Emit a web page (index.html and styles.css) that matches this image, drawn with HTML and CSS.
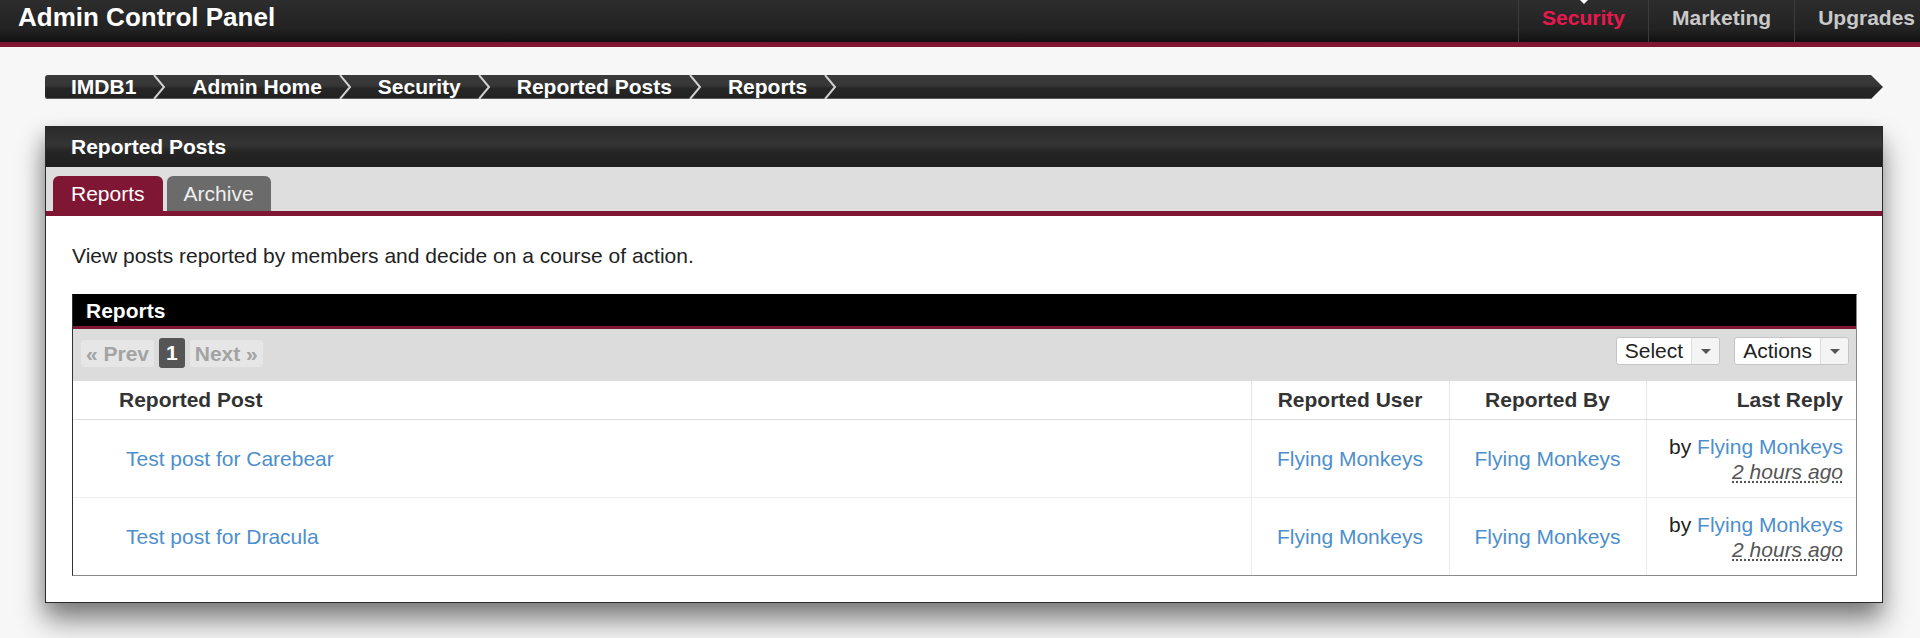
FILE: index.html
```html
<!DOCTYPE html>
<html lang="en">
<head>
  <meta charset="UTF-8">
  <title>Admin Control Panel - Reported Posts</title>
  <link rel="stylesheet" href="styles.css">
</head>
<body>
  <div class="topbar">
    <div class="brand">Admin Control Panel</div>
    <ul class="topnav">
      <li class="active">Security</li>
      <li>Marketing</li>
      <li>Upgrades</li>
    </ul>
  </div>

  <div class="page">
    <div class="breadcrumb">
      <a class="crumb" href="#">IMDB1</a>
      <span class="sep"><svg width="14" height="24" viewBox="0 0 14 24"><polyline points="2,0 12,12 2,24" fill="none" stroke="#d0d0d0" stroke-width="2"/></svg></span>
      <a class="crumb" href="#">Admin Home</a>
      <span class="sep"><svg width="14" height="24" viewBox="0 0 14 24"><polyline points="2,0 12,12 2,24" fill="none" stroke="#d0d0d0" stroke-width="2"/></svg></span>
      <a class="crumb" href="#">Security</a>
      <span class="sep"><svg width="14" height="24" viewBox="0 0 14 24"><polyline points="2,0 12,12 2,24" fill="none" stroke="#d0d0d0" stroke-width="2"/></svg></span>
      <a class="crumb" href="#">Reported Posts</a>
      <span class="sep"><svg width="14" height="24" viewBox="0 0 14 24"><polyline points="2,0 12,12 2,24" fill="none" stroke="#d0d0d0" stroke-width="2"/></svg></span>
      <a class="crumb" href="#">Reports</a>
      <span class="sep"><svg width="14" height="24" viewBox="0 0 14 24"><polyline points="2,0 12,12 2,24" fill="none" stroke="#d0d0d0" stroke-width="2"/></svg></span>
    </div>

    <div class="panel">
      <div class="panel-head">Reported Posts</div>
      <div class="tabs">
        <a class="tab active" href="#">Reports</a>
        <a class="tab" href="#">Archive</a>
      </div>

      <div class="panel-body">
        <p class="intro">View posts reported by members and decide on a course of action.</p>

        <div class="block">
          <div class="block-head">Reports</div>
          <div class="toolbar">
            <div class="pager">
              <span class="page-btn disabled">« Prev</span>
              <span class="page-btn current">1</span>
              <span class="page-btn disabled">Next »</span>
            </div>
            <div class="tools">
              <div class="split-btn">
                <span class="split-label">Select</span>
                <span class="split-caret"></span>
              </div>
              <div class="split-btn">
                <span class="split-label">Actions</span>
                <span class="split-caret"></span>
              </div>
            </div>
          </div>

          <table class="reports">
            <colgroup>
              <col class="col-post">
              <col class="col-user">
              <col class="col-by">
              <col>
            </colgroup>
            <thead>
              <tr>
                <th class="th-post">Reported Post</th>
                <th>Reported User</th>
                <th>Reported By</th>
                <th class="th-last">Last Reply</th>
              </tr>
            </thead>
            <tbody>
              <tr>
                <td class="td-post"><a href="#">Test post for Carebear</a></td>
                <td class="td-center"><a href="#">Flying Monkeys</a></td>
                <td class="td-center"><a href="#">Flying Monkeys</a></td>
                <td class="td-last">by <a href="#">Flying Monkeys</a><br><span class="ago">2 hours ago</span></td>
              </tr>
              <tr>
                <td class="td-post"><a href="#">Test post for Dracula</a></td>
                <td class="td-center"><a href="#">Flying Monkeys</a></td>
                <td class="td-center"><a href="#">Flying Monkeys</a></td>
                <td class="td-last">by <a href="#">Flying Monkeys</a><br><span class="ago">2 hours ago</span></td>
              </tr>
            </tbody>
          </table>
        </div>
      </div>
    </div>
  </div>
</body>
</html>
```

FILE: styles.css
```css
body {
  margin: 0;
  background-color: #f7f7f7;
  font-family: "Liberation Sans", Arial, sans-serif;
  font-size: 21px;
  color: #333;
  overflow: hidden;
}

a {
  color: #4d8fcc;
  text-decoration: none;
}

/* top bar */
.topbar {
  display: flex;
  height: 42px;
  background: linear-gradient(#2d2d2d, #222 70%, #111);
  border-bottom: 5px solid #7f1734;
  overflow: hidden;
}

.brand {
  padding-left: 18px;
  font-size: 26px;
  font-weight: bold;
  color: #fff;
  line-height: 35px;
}

.topnav {
  display: flex;
  margin: 0 -18px 0 auto;
  padding: 0;
  list-style: none;
}

.topnav li {
  position: relative;
  padding: 0 23px 7px;
  line-height: 35px;
  font-weight: bold;
  color: #c9c9c9;
  border-left: 1px solid #3c3c3c;
}

.topnav li.active {
  color: #e8184f;
}

.topnav li.active::before {
  content: "";
  position: absolute;
  top: 0;
  left: 50%;
  margin-left: -4px;
  border: 4px solid transparent;
  border-top-color: #fff;
}

/* page */
.page {
  padding: 28px 37px 60px 45px;
}

.breadcrumb {
  display: flex;
  align-items: center;
  height: 24px;
  padding-left: 26px;
  background: linear-gradient(#3a3a3a, #363636 45%, #262626 55%, #222);
  border-radius: 3px 0 0 3px;
  box-shadow: inset 0 -1px 0 #5a5a5a;
  clip-path: polygon(0 0, calc(100% - 12px) 0, 100% 50%, calc(100% - 12px) 100%, 0 100%);
}

.crumb {
  color: #fff;
  font-weight: bold;
  line-height: 24px;
}

.sep {
  display: flex;
  margin: 0 26px 0 16px;
}

/* panel */
.panel {
  margin-top: 27px;
  background-color: #fff;
  border: 1px solid #2a2a2a;
  box-shadow: 0 18px 26px rgba(0, 0, 0, 0.45), -4px 6px 16px rgba(0, 0, 0, 0.12);
}

.panel-head {
  height: 40px;
  line-height: 40px;
  padding-left: 25px;
  color: #fff;
  font-weight: bold;
  background: linear-gradient(#2a2a2a, #353535 45%, #262626 60%, #1e1e1e);
}

.tabs {
  display: flex;
  gap: 4px;
  padding: 9px 0 0 7px;
  background-color: #dedede;
  border-bottom: 5px solid #7f1734;
}

.tab {
  padding: 0 17px;
  line-height: 35px;
  border-radius: 6px 6px 0 0;
  background-color: #6b6b6b;
  color: #f0f0f0;
}

.tab.active {
  padding: 0 18px;
  background-color: #7f1734;
  color: #fff;
}

.panel-body {
  padding: 28px 25px 26px 26px;
}

.intro {
  margin: 0 0 26px;
  line-height: 24px;
  color: #222;
}

/* reports block */
.block {
  border: 1px solid #888;
  border-top-color: #000;
  border-left-color: #333;
}

.block-head {
  height: 31px;
  line-height: 31px;
  padding-left: 13px;
  background-color: #000;
  color: #fff;
  font-weight: bold;
  border-bottom: 3px solid #7f1734;
}

.toolbar {
  display: flex;
  justify-content: space-between;
  align-items: flex-start;
  height: 44px;
  padding: 8px 7px 0 8px;
  background-color: #dcdcdc;
}

.pager {
  display: flex;
  align-items: center;
  gap: 5px;
  margin-top: 1px;
}

.page-btn {
  padding: 0 5px;
  line-height: 27px;
  font-weight: bold;
  border-radius: 3px;
}

.page-btn.disabled {
  color: #a3a3a3;
  background-color: #e6e6e6;
}

.page-btn.current {
  padding: 0 7px;
  line-height: 30px;
  background-color: #555;
  color: #fff;
}

.tools {
  display: flex;
  gap: 14px;
}

.split-btn {
  display: flex;
  height: 26px;
  line-height: 26px;
  background-color: #fff;
  border: 1px solid #c4c4c4;
  border-radius: 3px;
  color: #222;
}

.split-label {
  padding: 0 8px;
}

.split-caret {
  position: relative;
  width: 27px;
  background-color: #f4f4f4;
  border-left: 1px solid #ddd;
  border-radius: 0 3px 3px 0;
}

.split-caret::after {
  content: "";
  position: absolute;
  top: 11px;
  left: 9px;
  border: 5px solid transparent;
  border-top: 5px solid #555;
  border-bottom: 0;
}

/* table */
.reports {
  width: 100%;
  border-collapse: collapse;
  table-layout: fixed;
}

.col-post {
  width: 1178px;
}

.col-user {
  width: 198px;
}

.col-by {
  width: 197px;
}

.reports th {
  height: 38px;
  padding: 0;
  font-weight: bold;
  color: #333;
  text-align: center;
  border-bottom: 1px solid #ddd;
  border-left: 1px solid #e6e6e6;
}

.reports td {
  height: 77px;
  padding: 0;
  text-align: center;
  border-bottom: 1px solid #eee;
  border-left: 1px solid #ececec;
}

.reports tr > :first-child {
  border-left: none;
}

.reports tbody tr:last-child td {
  border-bottom: none;
}

.reports .th-post {
  padding-left: 46px;
  text-align: left;
}

.reports .th-last {
  padding-right: 13px;
  text-align: right;
}

.reports .td-post {
  padding-left: 53px;
  text-align: left;
}

.reports .td-last {
  padding-right: 13px;
  text-align: right;
  line-height: 25px;
  color: #222;
}

.ago {
  font-style: italic;
  color: #555;
  text-decoration: underline dotted #555;
  text-underline-offset: 3px;
}
```
